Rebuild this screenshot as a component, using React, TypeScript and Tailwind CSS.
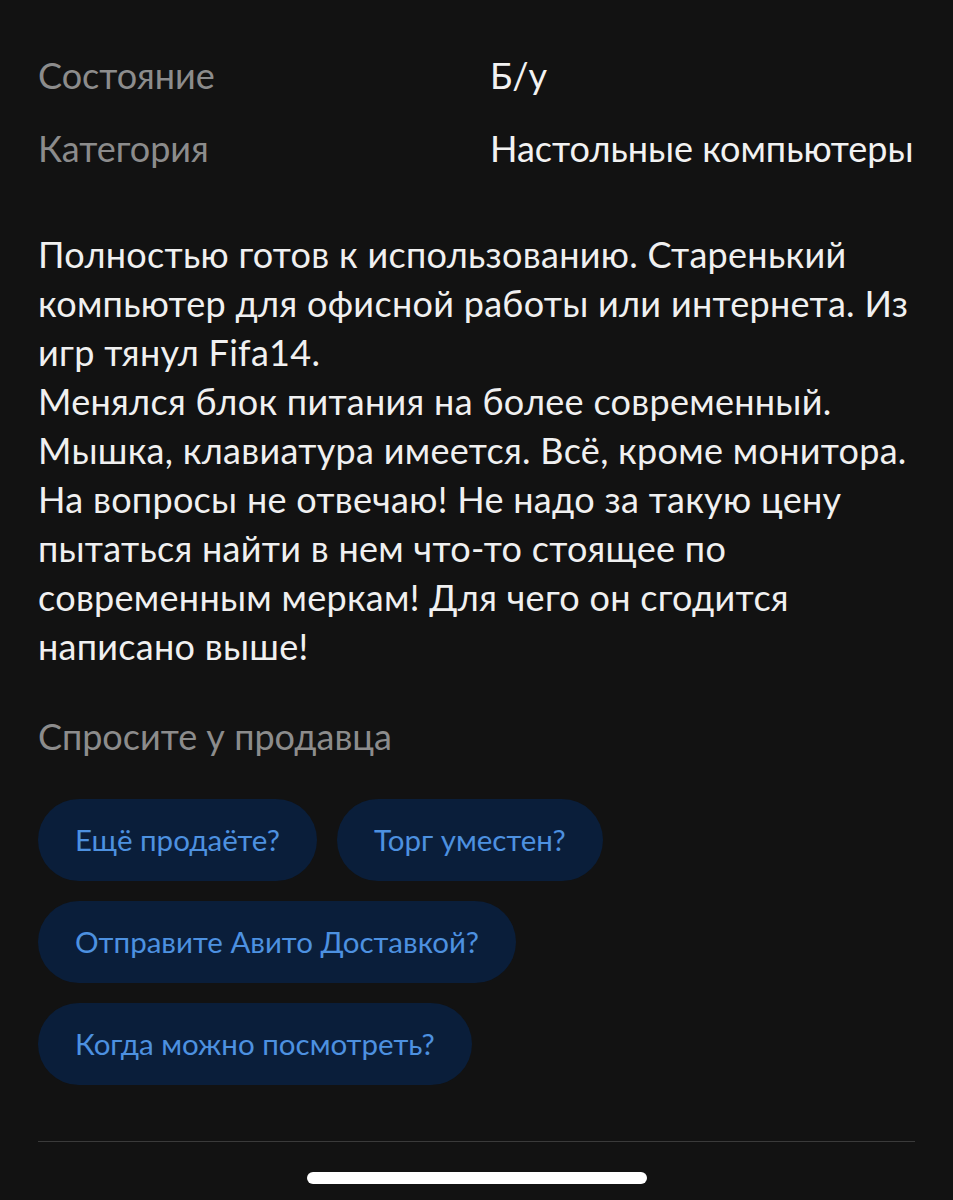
export default function App() {
  const rows = [
    { label: "Состояние", value: "Б/у" },
    { label: "Категория", value: "Настольные компьютеры" },
  ];
  const chips = [
    ["Ещё продаёте?", "Торг уместен?"],
    ["Отправите Авито Доставкой?"],
    ["Когда можно посмотреть?"],
  ];
  return (
    <div
      className="min-h-[1200px] w-[953px] bg-[#121212] px-[38px] pt-[50px] text-[#f2f2f2]"
      style={{ fontFamily: "Lato, 'Noto Sans', sans-serif" }}
    >
      <div className="flex flex-col gap-[23px]">
        {rows.map((r) => (
          <div key={r.label} className="flex h-[50px] items-center text-[36px]">
            <div className="w-[452px] text-[#8c8c8c]">{r.label}</div>
            <div>{r.value}</div>
          </div>
        ))}
      </div>
      <p className="mt-[57px] text-[36px] leading-[49px] tracking-[0.3px] text-[#f0f0f0]">
        Полностью готов к использованию. Старенький компьютер для офисной работы или интернета. Из игр тянул Fifa14.
        <br />
        Менялся блок питания на более современный. Мышка, клавиатура имеется. Всё, кроме монитора. На вопросы не отвечаю! Не надо за такую цену пытаться найти в нем что-то стоящее по современным меркам! Для чего он сгодится написано выше!
      </p>
      <div className="mt-[40px] text-[36px] leading-[50px] text-[#8c8c8c]">Спросите у продавца</div>
      <div className="mt-[38px] flex flex-col gap-[20px]">
        {chips.map((row, i) => (
          <div key={i} className="flex gap-[20px]">
            {row.map((c) => (
              <div
                key={c}
                className="flex h-[82px] items-center rounded-full bg-[#0a1e3a] px-[37px] text-[29.5px] text-[#4d91e0]"
              >
                {c}
              </div>
            ))}
          </div>
        ))}
      </div>
      <div className="mt-[56px] h-px w-[877px] bg-[#3a3a3a]" />
      <div className="flex justify-center pt-[30px]">
        <div className="h-[12px] w-[340px] rounded-full bg-white" />
      </div>
    </div>
  );
}
